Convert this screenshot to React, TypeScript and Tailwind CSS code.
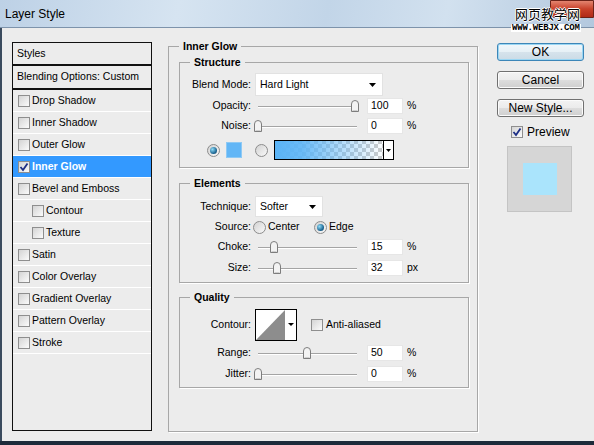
import React from "react";

const styleItems = [
  { label: "Drop Shadow" },
  { label: "Inner Shadow" },
  { label: "Outer Glow" },
  { label: "Inner Glow", active: true },
  { label: "Bevel and Emboss" },
  { label: "Contour", indent: true },
  { label: "Texture", indent: true },
  { label: "Satin" },
  { label: "Color Overlay" },
  { label: "Gradient Overlay" },
  { label: "Pattern Overlay" },
  { label: "Stroke" },
];

function CheckBox({ checked }: { checked?: boolean }) {
  return (
    <span className="flex h-[12px] w-[12px] shrink-0 items-center justify-center border border-[#8e8e8e] bg-[linear-gradient(135deg,#d4d4d4,#fbfbfb)]">
      {checked && (
        <svg width="10" height="10" viewBox="0 0 10 10">
          <path d="M1.5 5 L4 8 L8.5 1.5" stroke="#1d2f86" strokeWidth="1.8" fill="none" />
        </svg>
      )}
    </span>
  );
}

function Radio({ on }: { on?: boolean }) {
  return (
    <span className="flex h-[13px] w-[13px] shrink-0 items-center justify-center rounded-full border border-[#8c8c8c] bg-[linear-gradient(135deg,#d2d2d2,#f9f9f9)]">
      {on && (
        <span className="h-[7px] w-[7px] rounded-full bg-[radial-gradient(circle_at_35%_35%,#8fdcf8,#1b6491_65%,#15405e)]" />
      )}
    </span>
  );
}

function DropArrow() {
  return (
    <svg width="7" height="4" viewBox="0 0 7 4">
      <polygon points="0,0 7,0 3.5,4" fill="#000" />
    </svg>
  );
}

function Select({ text, width }: { text: string; width: string }) {
  return (
    <div
      className={`flex h-full items-center justify-between border border-[#e2e2e2] bg-white pl-[4px] pr-[6px] ${width}`}
    >
      <span>{text}</span>
      <DropArrow />
    </div>
  );
}

function Slider({ thumb }: { thumb: number }) {
  return (
    <div className="relative h-full w-[108px]">
      <div className="absolute left-[3px] top-[8px] h-[2px] w-[99px] border-t border-[#a4a4a4] border-b border-b-white" />
      <svg
        className="absolute top-[2px]"
        style={{ left: thumb }}
        width="8"
        height="12"
        viewBox="0 0 8 12"
      >
        <path d="M0.5 11.5 V4 Q0.5 0.5 4 0.5 Q7.5 0.5 7.5 4 V11.5 Z" fill="#f3f3f3" stroke="#7d7d7d" />
        <line x1="1.5" y1="10.5" x2="6.5" y2="10.5" stroke="#cfcfcf" />
      </svg>
    </div>
  );
}

function NumField({ value }: { value: string }) {
  return (
    <div className="flex h-[16px] w-[36px] items-center border border-[#e6e6e6] bg-white pl-[3px]">
      {value}
    </div>
  );
}

function SliderRow({
  label,
  thumb,
  value,
  unit,
  className,
}: {
  label: string;
  thumb: number;
  value: string;
  unit: string;
  className: string;
}) {
  return (
    <div className={`flex h-[16px] items-center ${className}`}>
      <span className="w-[71px] text-right">{label}</span>
      <div className="ml-[4px] h-full">
        <Slider thumb={thumb} />
      </div>
      <div className="ml-[4px]">
        <NumField value={value} />
      </div>
      <span className="ml-[4px]">{unit}</span>
    </div>
  );
}

function Group({
  title,
  className,
  children,
}: {
  title: string;
  className: string;
  children?: React.ReactNode;
}) {
  return (
    <fieldset
      className={`border border-[#a7a7a7] shadow-[1px_1px_0_#ffffff] ${className}`}
    >
      <legend className="ml-[10px] px-[4px] text-[10.5px] font-bold leading-[14px]">
        {title}
      </legend>
      {children}
    </fieldset>
  );
}

function GradientBar() {
  return (
    <svg width="120" height="20" viewBox="0 0 120 20">
      <defs>
        <pattern id="chk" width="8" height="8" patternUnits="userSpaceOnUse">
          <rect width="8" height="8" fill="#ffffff" />
          <rect width="4" height="4" fill="#cccccc" />
          <rect x="4" y="4" width="4" height="4" fill="#cccccc" />
        </pattern>
        <linearGradient id="glow" x1="0" x2="1" y1="0" y2="0">
          <stop offset="0" stopColor="#5bb4f6" />
          <stop offset="0.25" stopColor="#5bb4f6" stopOpacity="0.9" />
          <stop offset="1" stopColor="#5bb4f6" stopOpacity="0" />
        </linearGradient>
      </defs>
      <rect x="1" y="1" width="109" height="18" fill="url(#chk)" />
      <rect x="1" y="1" width="109" height="18" fill="url(#glow)" />
      <rect x="110" y="1" width="9" height="18" fill="#ffffff" />
      <rect x="0.5" y="0.5" width="119" height="19" fill="none" stroke="#000" />
      <line x1="109.5" y1="0" x2="109.5" y2="20" stroke="#000" />
      <polygon points="112,9 117,9 114.5,12" fill="#000" />
    </svg>
  );
}

function ContourPicker() {
  return (
    <svg width="42" height="32" viewBox="0 0 42 32">
      <rect x="0.5" y="0.5" width="41" height="31" fill="#ffffff" stroke="#000" />
      <polygon points="1,31 30,1 30,31" fill="#8d8d8d" />
      <polygon points="33,14 39,14 36,17" fill="#000" />
    </svg>
  );
}

function DialogButton({ label, focused }: { label: string; focused?: boolean }) {
  return (
    <button
      className={`flex h-[18px] w-[87px] items-center justify-center rounded-[3px] border text-[12px] leading-none text-black ${
        focused
          ? "border-[#3d86b8] bg-[linear-gradient(#f1f7fb,#e6f0f6_50%,#d6e3ec_50%,#cbdbe6)] shadow-[inset_0_0_0_1px_#9ad6f3]"
          : "border-[#707070] bg-[linear-gradient(#f3f3f3,#ebebeb_50%,#dddddd_50%,#cfcfcf)] shadow-[inset_0_0_0_1px_#fbfbfb]"
      }`}
    >
      {label}
    </button>
  );
}

export default function App() {
  return (
    <div className="relative h-[445px] w-[594px] overflow-hidden bg-[#1d2a3a] font-['Liberation_Sans',Arial,sans-serif] text-black">
      {/* title bar */}
      <div className="flex h-[28px] items-center border-b border-[#7d93ab] bg-[linear-gradient(100deg,#bdd1e6,#d6e4f1_30%,#c2d5e8_55%,#d2e1ef_75%,#b3c8de)] pl-[5px] text-[12px]">
        Layer Style
      </div>
      <div className="absolute right-0 top-0 h-[18px] w-[44px] rounded-bl-[5px] border border-[#6b2218] bg-[linear-gradient(#e4846f,#c8412a_50%,#b02a17)]" />
      <div className="absolute left-[515px] top-[6px] font-['Noto_Sans_CJK_SC',sans-serif] text-[13px] leading-[16px] [text-shadow:1px_0_0_#fff,-1px_0_0_#fff,0_1px_0_#fff,0_-1px_0_#fff]">
        网页教学网
      </div>
      <div className="absolute left-[511px] top-[24px] bg-white px-[1px] font-['Liberation_Mono',monospace] text-[9px] font-bold leading-[8px] tracking-[-0.2px]">
        WWW.WEBJX.COM
      </div>

      {/* body */}
      <div className="flex h-[413px] items-start border-l-2 border-[#3a4a5d] bg-[#ececec] pl-[10px] pt-[11px] text-[10.5px]">
        {/* styles list */}
        <div className="mt-[3px] h-[389px] w-[140px] border border-[#111]">
          <div className="flex h-[23px] items-center border-b-2 border-[#111] pl-[4px]">Styles</div>
          <div className="flex h-[24px] items-center border-b-2 border-[#111] pl-[4px]">
            Blending Options: Custom
          </div>
          {styleItems.map((item) => (
            <div
              key={item.label}
              className={`flex h-[22px] items-center border-b border-white ${
                item.indent ? "pl-[19px]" : "pl-[5px]"
              } ${item.active ? "bg-[#3399ff] font-bold text-white" : ""}`}
            >
              <CheckBox checked={item.active} />
              <span className="ml-[2px]">{item.label}</span>
            </div>
          ))}
        </div>

        {/* settings */}
        <Group title="Inner Glow" className="ml-[16px] h-[393px] w-[310px]">
          <Group title="Structure" className="ml-[10px] mt-[2px] h-[113px] w-[290px]">
            <div className="mt-[4px] flex h-[23px] items-center">
              <span className="w-[71px] text-right">Blend Mode:</span>
              <div className="ml-[4px] h-full">
                <Select text="Hard Light" width="w-[128px]" />
              </div>
            </div>
            <SliderRow label="Opacity:" thumb={96} value="100" unit="%" className="mt-[2px]" />
            <SliderRow label="Noise:" thumb={-1} value="0" unit="%" className="mt-[4px]" />
            <div className="mt-[6px] flex h-[20px] items-center">
              <span className="ml-[27px]">
                <Radio on />
              </span>
              <span className="ml-[6px] h-[16px] w-[16px] border border-[#8ec9f4] bg-[#62b6f6]" />
              <span className="ml-[13px]">
                <Radio />
              </span>
              <span className="ml-[6px] flex">
                <GradientBar />
              </span>
            </div>
          </Group>

          <Group title="Elements" className="ml-[10px] mt-[8px] h-[107px] w-[290px]">
            <div className="mt-[6px] flex h-[21px] items-center">
              <span className="w-[71px] text-right">Technique:</span>
              <div className="ml-[4px] h-full">
                <Select text="Softer" width="w-[68px]" />
              </div>
            </div>
            <div className="mt-[3px] flex h-[14px] items-center">
              <span className="w-[71px] text-right">Source:</span>
              <span className="ml-[2px] flex w-[61px] items-center">
                <Radio />
                <span className="ml-[2px]">Center</span>
              </span>
              <Radio on />
              <span className="ml-[2px]">Edge</span>
            </div>
            <SliderRow label="Choke:" thumb={15} value="15" unit="%" className="mt-[5px]" />
            <SliderRow label="Size:" thumb={18} value="32" unit="px" className="mt-[5px]" />
          </Group>

          <Group title="Quality" className="ml-[10px] mt-[7px] h-[98px] w-[290px]">
            <div className="mt-[5px] flex h-[32px] items-center">
              <span className="w-[71px] text-right">Contour:</span>
              <span className="ml-[4px] flex">
                <ContourPicker />
              </span>
              <span className="ml-[14px]">
                <CheckBox />
              </span>
              <span className="ml-[3px]">Anti-aliased</span>
            </div>
            <SliderRow label="Range:" thumb={48} value="50" unit="%" className="mt-[4px]" />
            <SliderRow label="Jitter:" thumb={-1} value="0" unit="%" className="mt-[5px]" />
          </Group>
        </Group>

        {/* buttons */}
        <div className="ml-[19px] mt-[4px] flex w-[87px] flex-col">
          <DialogButton label="OK" focused />
          <div className="mt-[10px]">
            <DialogButton label="Cancel" />
          </div>
          <div className="mt-[10px]">
            <DialogButton label="New Style..." />
          </div>
          <div className="ml-[14px] mt-[8px] flex h-[13px] items-center text-[12px]">
            <CheckBox checked />
            <span className="ml-[4px]">Preview</span>
          </div>
          <div className="ml-[10px] mt-[8px] flex h-[66px] w-[65px] items-center justify-center border border-[#c4c4c4] bg-[#d6d6d6]">
            <div className="h-[32px] w-[34px] bg-[#aae4fc]" />
          </div>
        </div>
      </div>
    </div>
  );
}
